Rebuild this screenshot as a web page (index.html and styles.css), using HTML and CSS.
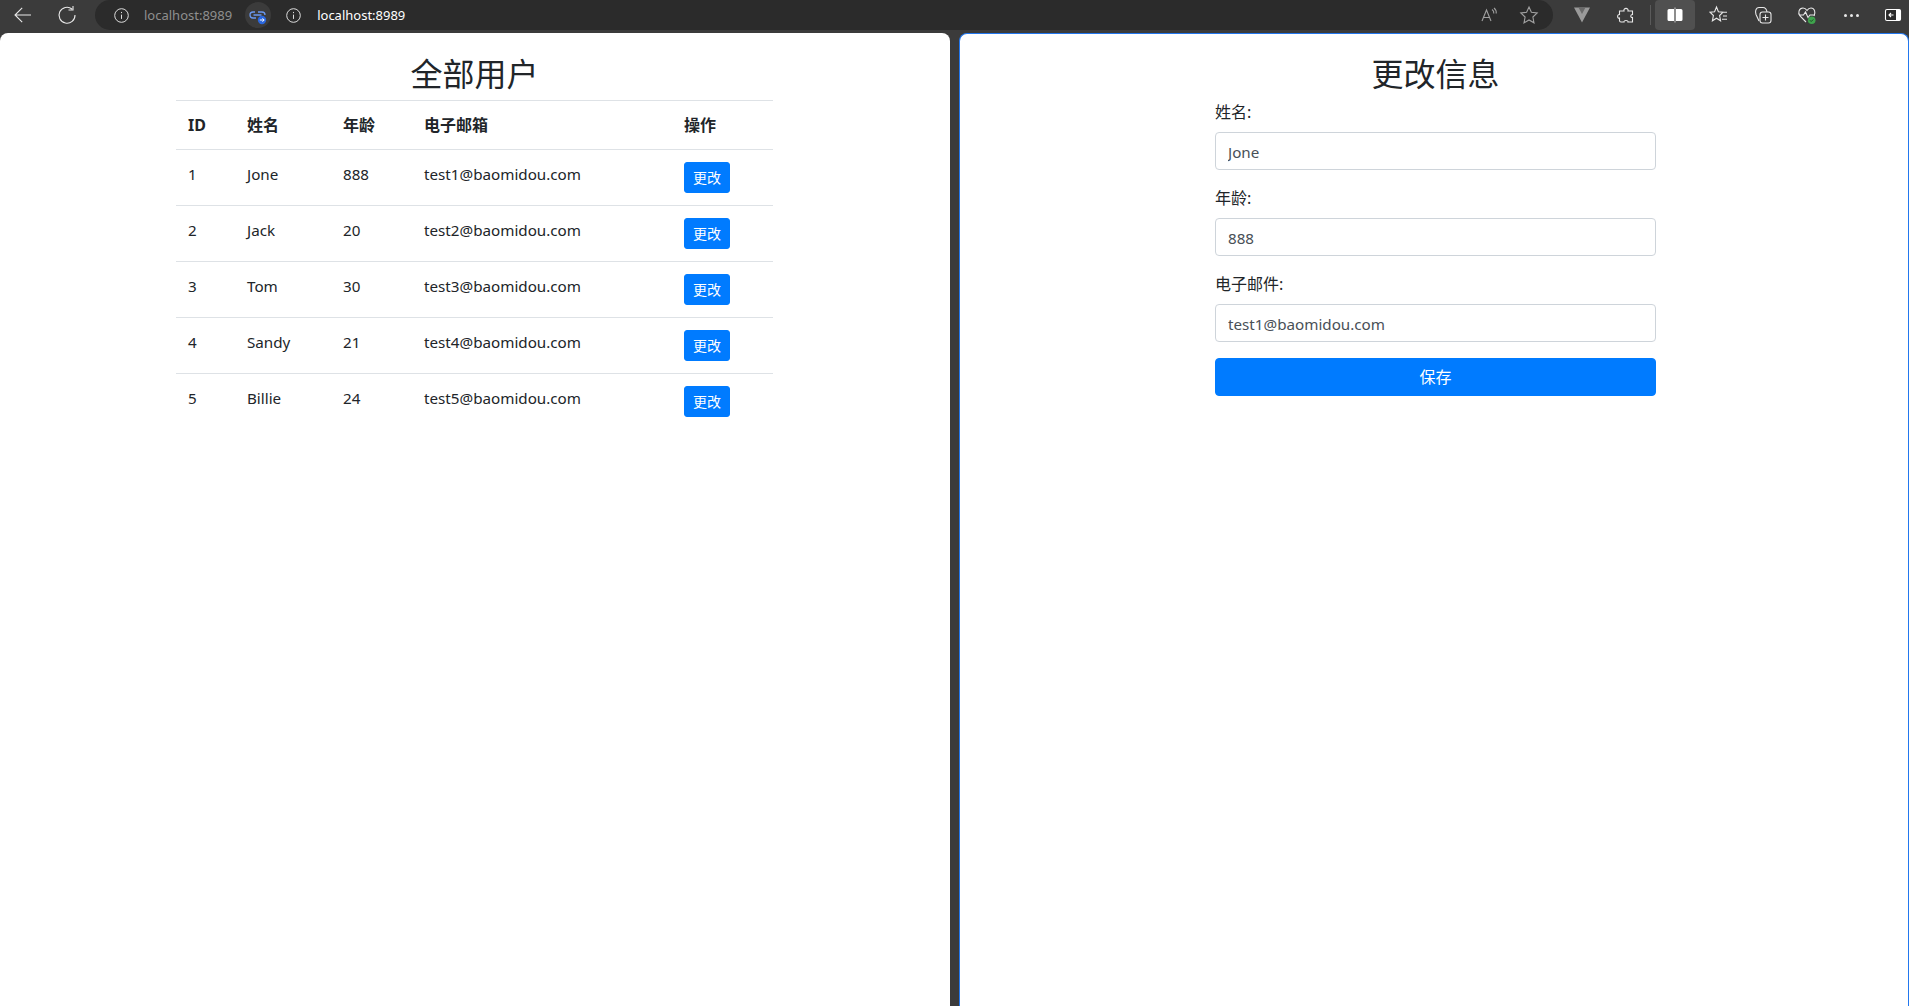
FILE: index.html
```html
<!DOCTYPE html>
<html lang="zh-CN">
<head>
<meta charset="utf-8">
<title>localhost:8989</title>
<link rel="stylesheet" href="styles.css">
</head>
<body>
<header class="toolbar">
  <button class="tb-btn back"><svg viewBox="0 0 20 20" class="ic"><path d="M18 10H2M9.200 2.800 2 10l7.200 7.200"/></svg></button>
  <button class="tb-btn reload"><svg viewBox="0 0 20 20" class="ic"><path d="M15 4a8 8 0 1 0 3 6M16 1v4h-4.500"/></svg></button>
  <div class="omnibox">
    <svg viewBox="0 0 20 20" class="ic info"><circle cx="10" cy="10" r="8"/><path d="M10 9v5M10 5.800v1.400"/></svg>
    <span class="url-dim">localhost:8989</span>
    <span class="link-chip"><svg viewBox="0 0 26 26" class="chip-ic"><path class="chain" d="M10 10H8a3 3 0 0 0 0 6h3M8.500 13h8M13 10h4a3 3 0 0 1 3 3"/><circle class="dot" cx="17" cy="18" r="4.200"/><path class="arrow" d="M14.800 18h4.200M17.500 16.300 19.200 18l-1.700 1.700"/></svg></span>
    <svg viewBox="0 0 20 20" class="ic info"><circle cx="10" cy="10" r="8"/><path d="M10 9v5M10 5.800v1.400"/></svg>
    <span class="url">localhost:8989</span>
    <span class="spacer"></span>
    <svg viewBox="0 0 20 20" class="ic dim read"><path d="M3 16 7.500 5 12 16M4.500 12.500h6M13 4.500a4 4 0 0 1 1.800 4M15 3a6 6 0 0 1 2.200 5.500"/></svg>
    <svg viewBox="0 0 20 20" class="ic dim star"><path d="M10 2l2.400 5.300 5.800.7-4.300 4 1.100 5.800-5-2.900-5 2.900 1.100-5.800-4.300-4 5.800-.7z"/></svg>
  </div>
  <div class="tb-right">
    <span class="tb-slot"><svg viewBox="0 0 20 20" class="vue"><path d="M2 2.500h16L10 17.500z" fill="#9a9a9a"/><path d="M6.500 2.500h7L10 9z" fill="#6a6a6a"/></svg></span>
    <span class="tb-slot"><svg viewBox="0 0 20 20" class="ic"><path d="M3.500 6H8c-1-3.500 5-3.500 4 0h4.500v3.500c-2-.5-2.500 3.500 0 3v4.500H12c.5-2-4.500-2-4 0H5a1.500 1.500 0 0 1-1.500-1.500v-2.500C1 14 1 9 3.500 9.500z"/></svg></span>
    <span class="tb-sep"></span>
    <span class="tb-slot active"><svg viewBox="0 0 20 20" class="split"><path d="M2.500 5.500a1.500 1.500 0 0 1 1.500-1.500h5v12H4a1.500 1.500 0 0 1-1.500-1.500zM11 4h5a1.500 1.500 0 0 1 1.500 1.500v9A1.500 1.500 0 0 1 16 16h-5z" fill="#fff"/><path d="M10 2.500v15" class="split-line"/></svg></span>
    <span class="tb-slot"><svg viewBox="0 0 20 20" class="ic"><path d="M7.500 2l1.900 4.700 4.600.5-3.400 3.300 1 5.300-4.100-2.600-4.100 2.600 1-5.300L1 7.200l4.600-.5zM13.500 7.300H18M14 11h4M13 14.300h5"/></svg></span>
    <span class="tb-slot"><svg viewBox="0 0 20 20" class="ic"><path d="M6 16 3 9.500C2 7 2.500 2.500 6 2.500h4c2 0 3.500 1.500 4 4.500"/><rect x="7" y="7" width="11" height="11" rx="2.500"/><path d="M12.500 9.500v6M9.500 12.500h6"/></svg></span>
    <span class="tb-slot"><svg viewBox="0 0 22 22" class="health"><path class="h-line" d="M10 18 4 12C1.500 9 3 4 7 4c1.800 0 3 1 4 2.500C12 5 13.500 4 15 4c3.500 0 5 4.500 3 8M3 11h4.500l2-3 2.500 5.500 2-2.500h5"/><circle cx="15.700" cy="16.300" r="3.800" fill="#3fa34d"/><path class="h-check" d="M14 16.300l1.200 1.200 2.100-2.100"/></svg></span>
    <span class="tb-slot"><span class="dots"><i></i><i></i><i></i></span></span>
    <span class="tb-slot last"><svg viewBox="0 0 20 20" class="panel"><rect x="2.500" y="4.500" width="15" height="11" rx="1.500" class="p-frame"/><path d="M13 4.500h3.500a1.500 1.500 0 0 1 1 1v9a1.500 1.500 0 0 1-1 1H13z" fill="#fff"/><path d="M5.500 10h5M8 8 6 10l2 2" class="p-arrow"/></svg></span>
  </div>
</header>
<main class="split-view">
  <section class="pane pane-left">
    <h2 class="title">全部用户</h2>
    <table class="users">
      <thead>
        <tr><th class="c-id">ID</th><th class="c-name">姓名</th><th class="c-age">年龄</th><th class="c-mail">电子邮箱</th><th class="c-op">操作</th></tr>
      </thead>
      <tbody>
        <tr><td>1</td><td>Jone</td><td>888</td><td>test1@baomidou.com</td><td><button class="btn btn-sm">更改</button></td></tr>
        <tr><td>2</td><td>Jack</td><td>20</td><td>test2@baomidou.com</td><td><button class="btn btn-sm">更改</button></td></tr>
        <tr><td>3</td><td>Tom</td><td>30</td><td>test3@baomidou.com</td><td><button class="btn btn-sm">更改</button></td></tr>
        <tr><td>4</td><td>Sandy</td><td>21</td><td>test4@baomidou.com</td><td><button class="btn btn-sm">更改</button></td></tr>
        <tr><td>5</td><td>Billie</td><td>24</td><td>test5@baomidou.com</td><td><button class="btn btn-sm">更改</button></td></tr>
      </tbody>
    </table>
  </section>
  <section class="pane pane-right">
    <h2 class="title">更改信息</h2>
    <form class="edit-form">
      <div class="group"><label class="lbl">姓名:</label><input class="field" value="Jone"></div>
      <div class="group"><label class="lbl">年龄:</label><input class="field" value="888"></div>
      <div class="group"><label class="lbl">电子邮件:</label><input class="field" value="test1@baomidou.com"></div>
      <button type="button" class="btn btn-block">保存</button>
    </form>
  </section>
</main>
</body>
</html>
```
FILE: styles.css
```css
* { box-sizing: border-box; }
html, body { height: 100%; }
body {
  margin: 0;
  height: 1006px;
  overflow: hidden;
  display: flex;
  flex-direction: column;
  background: #3b3b3b;
  font-family: "Noto Sans", "Noto Sans CJK SC", sans-serif;
  font-size: 16px;
  line-height: 24px;
  color: #212529;
}
.toolbar {
  height: 33px;
  flex: none;
  display: flex;
  align-items: center;
  padding: 0 0 3px 11px;
  background: #3b3b3b;
}
.tb-btn { width: 24px; height: 24px; padding: 2px; border: 0; background: none; display: flex; }
.back { margin-right: 20px; }
.reload { margin-right: 16px; }
.ic { width: 20px; height: 20px; flex: none; fill: none; stroke: #e8e8e8; stroke-width: 1.1; }
.ic.dim { stroke: #a0a0a0; }
.omnibox {
  width: 1458px;
  flex: none;
  height: 30px;
  display: flex;
  align-items: center;
  padding: 0 14px 0 18px;
  background: #2b2b2b;
  border-radius: 15px;
  font-size: 13px;
}
.info { width: 17px; height: 17px; }
.url-dim { color: #8f8f8f; margin: 0 13px 0 14px; }
.url { color: #fff; margin-left: 15px; }
.link-chip { width: 26px; height: 26px; border-radius: 50%; background: #3b3b3b; margin-right: 14px; }
.chip-ic { width: 26px; height: 26px; display: block; fill: none; }
.chain { stroke: #6a98f0; stroke-width: 1.3; }
.dot { fill: #2a66dc; stroke: none; }
.arrow { stroke: #fff; stroke-width: 1; }
.spacer { flex: 1; }
.read { margin-right: 20px; }
.tb-right { display: flex; align-items: center; margin-left: 7px; }
.tb-slot { width: 44px; height: 30px; flex: none; display: flex; align-items: center; justify-content: center; border-radius: 4px; }
.tb-sep { width: 1px; height: 20px; background: #5a5a5a; margin: 0 4px 0 2px; }
.active { background: #505050; width: 40px; margin-right: 2px; }
.last { width: 40px; margin-right: -4px; }
.vue, .split, .panel { width: 20px; height: 20px; }
.split-line { stroke: #fff; stroke-width: .7; }
.health { width: 22px; height: 22px; fill: none; }
.h-line { stroke: #e8e8e8; stroke-width: 1.1; }
.h-check { stroke: #1d4a24; stroke-width: 1; }
.p-frame { fill: #2b2b2b; stroke: #fff; stroke-width: 1.1; }
.p-arrow { stroke: #fff; stroke-width: 1.1; fill: none; }
.dots { display: flex; gap: 3px; }
.dots i { width: 3px; height: 3px; border-radius: 50%; background: #e8e8e8; }

.split-view { flex: 1; min-height: 0; display: flex; gap: 9px; }
.pane {
  background: #fff;
  border-radius: 8px 8px 0 0;
  display: flex;
  flex-direction: column;
  align-items: center;
}
.pane-left { flex: none; width: 950px; padding: 22px 1px 0 0; }
.pane-right { flex: 1; border: 1px solid #2277ee; border-bottom: 0; padding: 21px 0 0 3px; }
.title { margin: 0 0 7px; font-size: 32px; font-weight: 400; line-height: 38px; }
.users { width: 597px; border-collapse: collapse; }
.users th, .users td { padding: 12px; border-top: 1px solid #dee2e6; text-align: left; vertical-align: top; }
.users th { font-weight: 700; }
.users td { font-size: 15.2px; }
.c-id { width: 59px; } .c-name { width: 96px; } .c-age { width: 81px; } .c-mail { width: 260px; }
.btn { background: #007bff; color: #fff; border: 1px solid #007bff; font: inherit; cursor: pointer; display: block; }
.btn-sm { font-size: 14px; line-height: 21px; padding: 4px 8px; border-radius: 3px; }
.edit-form { width: 441px; }
.group { margin-bottom: 16px; }
.lbl { display: block; margin-bottom: 8px; }
.field { display: block; width: 100%; height: 38px; padding: 7px 12px 5px; font: inherit; font-size: 15.2px; color: #495057; border: 1px solid #ced4da; border-radius: 4px; background: #fff; }
.btn-block { width: 100%; height: 38px; border-radius: 4px; padding: 6px 12px; }
```
